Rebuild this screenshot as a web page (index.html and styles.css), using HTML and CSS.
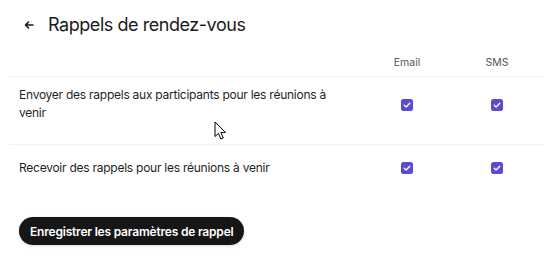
FILE: index.html
```html
<!DOCTYPE html>
<html lang="fr">
<head>
<meta charset="utf-8">
<link rel="stylesheet" href="styles.css">
</head>
<body>
<div class="page">
  <header class="top">
    <svg class="back" width="10" height="10" viewBox="0 0 10 10"><path d="M9 5H1.5M4.5 2L1.5 5L4.5 8" fill="none" stroke="#1a1a1a" stroke-width="1.6" stroke-linecap="round" stroke-linejoin="round"/></svg>
    <h1 class="title">Rappels de rendez-vous</h1>
  </header>
  <div class="table">
    <div class="row head">
      <div class="label"></div>
      <div class="col">Email</div>
      <div class="col">SMS</div>
    </div>
    <div class="row r1">
      <div class="label">Envoyer des rappels aux participants pour les réunions à venir</div>
      <div class="col"><span class="check"><svg width="12" height="12" viewBox="0 0 12 12"><path d="M3.2 6.2L5.1 8L8.8 4.2" fill="none" stroke="#fff" stroke-width="1.3" stroke-linecap="round" stroke-linejoin="round"/></svg></span></div>
      <div class="col"><span class="check"><svg width="12" height="12" viewBox="0 0 12 12"><path d="M3.2 6.2L5.1 8L8.8 4.2" fill="none" stroke="#fff" stroke-width="1.3" stroke-linecap="round" stroke-linejoin="round"/></svg></span></div>
    </div>
    <div class="row r2">
      <div class="label">Recevoir des rappels pour les réunions à venir</div>
      <div class="col"><span class="check"><svg width="12" height="12" viewBox="0 0 12 12"><path d="M3.2 6.2L5.1 8L8.8 4.2" fill="none" stroke="#fff" stroke-width="1.3" stroke-linecap="round" stroke-linejoin="round"/></svg></span></div>
      <div class="col"><span class="check"><svg width="12" height="12" viewBox="0 0 12 12"><path d="M3.2 6.2L5.1 8L8.8 4.2" fill="none" stroke="#fff" stroke-width="1.3" stroke-linecap="round" stroke-linejoin="round"/></svg></span></div>
    </div>
  </div>
  <div class="actions">
    <button class="save">Enregistrer les paramètres de rappel</button>
  </div>
  <svg class="cursor" width="14" height="20" viewBox="0 0 14 20"><path d="M1 1V15.5L4.4 12.3L6.9 18L9.3 17L6.8 11.4H11.5Z" fill="#fff" stroke="#000" stroke-width="1" stroke-linejoin="round"/></svg>
</div>
</body>
</html>
```
FILE: styles.css
```css
* { box-sizing: border-box; }
html, body { margin: 0; padding: 0; background: #fff; }
body { font-family: Inter, "Noto Sans", sans-serif; color: #1f1f1f; }
.page { position: relative; width: 553px; height: 267px; padding: 0 9px; overflow: hidden; }
.top { display: flex; align-items: center; gap: 14px; padding: 12px 0 0 15px; height: 37px; }
.back { display: block; flex: none; }
.title { margin: 0; font-size: 18px; font-weight: 400; line-height: 24px; letter-spacing: -0.45px; color: #1a1a1a; }
.table { width: 535px; margin-top: 14px; }
.row { display: grid; grid-template-columns: 1fr 86px 94px; align-items: center; border-bottom: 1px solid #f1f1f4; }
.row.head { height: 26px; align-items: start; padding-top: 5px; font-size: 10.5px; color: #555; line-height: 14px; }
.row.r2 { border-bottom: none; }
.col { display: flex; justify-content: center; }
.label { padding-left: 10px; font-size: 12px; letter-spacing: -0.25px; line-height: 18px; color: #1f1f1f; padding-right: 30px; }
.r1 { padding: 9px 0 22px; }
.r1 .col { padding-top: 2px; }
.r2 { padding: 14px 0 0; }
.check { width: 12px; height: 12px; border-radius: 2.5px; background: #5a4bd0; display: flex; align-items: center; justify-content: center; }
.check svg { display: block; }
.actions { padding: 40px 0 0 10px; }
.save { font-family: Inter, "Noto Sans", sans-serif; font-size: 12px; font-weight: 600; letter-spacing: -0.2px; color: #fff; background: #161616; border: none; border-radius: 14px; height: 28px; padding: 0 11px; box-shadow: 0 1px 3px rgba(0,0,0,0.15); }
.cursor { position: absolute; left: 214px; top: 121px; }
```
